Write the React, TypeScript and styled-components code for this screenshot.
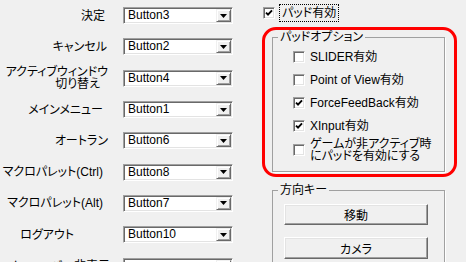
import React from "react";
import styled, { createGlobalStyle } from "styled-components";

const Global = createGlobalStyle`
  html, body { margin: 0; padding: 0; background: #f0f0f0; }
  body {
    font-family: "Liberation Sans", "Noto Sans CJK JP", sans-serif;
    font-size: 12px;
    color: #000;
  }
  #root { width: 466px; height: 262px; overflow: hidden; }
`;

const Page = styled.div`
  display: grid;
  grid-template-columns: 262px 1fr;
  width: 466px;
  height: 262px;
  overflow: hidden;
  background: #f0f0f0;
  font-feature-settings: "palt";
`;

const LeftCol = styled.div`
  display: flex;
  flex-direction: column;
`;

const Row = styled.div`
  display: grid;
  grid-template-columns: 123px 110px;
  height: 31.3px;
  flex-shrink: 0;
  align-items: center;
`;

const Label = styled.div<{ $pr: number }>`
  display: flex;
  flex-direction: column;
  align-items: flex-end;
  padding-right: ${(p) => p.$pr}px;
  line-height: 12px;
  white-space: nowrap;
`;

const LabelLine = styled.span<{ $shift?: number }>`
  padding-right: ${(p) => p.$shift ?? 0}px;
`;

const Combo = styled.div`
  height: 17px;
  box-sizing: border-box;
  border: 1px solid;
  border-color: #a0a0a0 #ffffff #ffffff #a0a0a0;
  box-shadow: inset 1px 1px 0 #696969, inset -1px -1px 0 #e3e3e3;
  background: #fff;
  display: flex;
  align-items: center;
`;

const ComboText = styled.span`
  flex: 1;
  padding-left: 4px;
  line-height: 13px;
`;

const DropButton = styled.span`
  width: 15px;
  height: 13px;
  margin-right: 1px;
  box-sizing: border-box;
  background: #f0f0f0;
  border: 1px solid;
  border-color: #f0f0f0 #696969 #696969 #f0f0f0;
  box-shadow: inset 1px 1px 0 #fff, inset -1px -1px 0 #a0a0a0;
  display: flex;
  align-items: center;
  justify-content: center;
`;

const RightCol = styled.div`
  display: flex;
  flex-direction: column;
  padding-top: 5px;
`;

const CheckRow = styled.div<{ $h: number; $ml?: number }>`
  display: flex;
  align-items: center;
  gap: 5px;
  height: ${(p) => p.$h}px;
  margin-left: ${(p) => p.$ml ?? 0}px;
  line-height: 12px;
  white-space: nowrap;
`;

const Box = styled.span`
  width: 12px;
  height: 12px;
  box-sizing: border-box;
  border: 1px solid;
  border-color: #a0a0a0 #ffffff #ffffff #a0a0a0;
  box-shadow: inset 1px 1px 0 #696969, inset -1px -1px 0 #e3e3e3;
  background: #fff;
  display: flex;
  align-items: center;
  justify-content: center;
  flex-shrink: 0;
`;

const Focused = styled.span`
  outline: 1px dotted #000;
  outline-offset: 0;
  padding: 2px 2px;
`;

const AnnotatedGroup = styled.div`
  position: relative;
  margin-top: 9px;
  margin-left: 10px;
  width: 173px;
`;

const GroupBox = styled.fieldset<{ $mt?: number; $ml?: number }>`
  margin: 0;
  margin-top: ${(p) => p.$mt ?? 0}px;
  margin-left: ${(p) => p.$ml ?? 0}px;
  width: 173px;
  box-sizing: border-box;
  min-width: 0;
  padding: 0;
  border: 1px solid #a0a0a0;
  box-shadow: 1px 1px 0 #fff;
`;

const Legend = styled.legend`
  margin-left: 5px;
  padding: 0 2px;
  line-height: 14px;
  font-size: 12px;
`;

const GroupBody = styled.div<{ $pad: string; $gap?: number }>`
  display: flex;
  flex-direction: column;
  padding: ${(p) => p.$pad};
  gap: ${(p) => p.$gap ?? 0}px;
`;

const Annotation = styled.div`
  position: absolute;
  left: -10px;
  top: -3px;
  right: -12px;
  bottom: -5px;
  border: 3px solid #ff0000;
  border-radius: 14px;
  pointer-events: none;
`;

const PushButton = styled.div<{ $h: number }>`
  width: 144px;
  height: ${(p) => p.$h}px;
  box-sizing: border-box;
  background: #f0f0f0;
  border: 1px solid;
  border-color: #ffffff #696969 #696969 #ffffff;
  box-shadow: inset -1px -1px 0 #a0a0a0, inset 1px 1px 0 #e3e3e3;
  display: flex;
  align-items: center;
  justify-content: center;
`;

const Arrow = () => (
  <svg width="7" height="4" viewBox="0 0 7 4">
    <path d="M0 0 H7 L3.5 4 Z" fill="#000" />
  </svg>
);

const Check = () => (
  <svg width="8" height="8" viewBox="0 0 8 8">
    <path d="M1 3.6 L3 5.6 L7 1.4" stroke="#000" strokeWidth="1.9" fill="none" />
  </svg>
);

type Mapping = { lines: { text: string; shift?: number }[]; pr: number; value: string };

const mappings: Mapping[] = [
  { lines: [{ text: "決定" }], pr: 18, value: "Button3" },
  { lines: [{ text: "キャンセル" }], pr: 16, value: "Button2" },
  {
    lines: [{ text: "アクティブウィンドウ" }, { text: "切り替え", shift: 8 }],
    pr: 15,
    value: "Button4",
  },
  { lines: [{ text: "メインメニュー" }], pr: 20, value: "Button1" },
  { lines: [{ text: "オートラン" }], pr: 15, value: "Button6" },
  { lines: [{ text: "マクロパレット(Ctrl)" }], pr: 20, value: "Button8" },
  { lines: [{ text: "マクロパレット(Alt)" }], pr: 20, value: "Button7" },
  { lines: [{ text: "ログアウト" }], pr: 49, value: "Button10" },
  { lines: [{ text: "メニューバー非表示" }], pr: 13, value: "" },
];

const options = [
  { lines: ["SLIDER有効"], checked: false, h: 23 },
  { lines: ["Point of View有効"], checked: false, h: 23 },
  { lines: ["ForceFeedBack有効"], checked: true, h: 23 },
  { lines: ["XInput有効"], checked: true, h: 23 },
  { lines: ["ゲームが非アクティブ時", "にパッドを有効にする"], checked: false, h: 24 },
];

export default function App() {
  return (
    <>
      <Global />
      <Page>
        <LeftCol>
          {mappings.map((m, i) => (
            <Row key={i}>
              <Label $pr={m.pr}>
                {m.lines.map((l, j) => (
                  <LabelLine key={j} $shift={l.shift}>
                    {l.text}
                  </LabelLine>
                ))}
              </Label>
              <Combo>
                <ComboText>{m.value}</ComboText>
                <DropButton>
                  <Arrow />
                </DropButton>
              </Combo>
            </Row>
          ))}
        </LeftCol>
        <RightCol>
          <CheckRow $h={16} $ml={1}>
            <Box>
              <Check />
            </Box>
            <Focused>パッド有効</Focused>
          </CheckRow>
          <AnnotatedGroup>
            <GroupBox>
              <Legend>パッドオプション</Legend>
              <GroupBody $pad="1.5px 0 9.5px 20px">
                {options.map((o, i) => (
                  <CheckRow key={i} $h={o.h}>
                    <Box>{o.checked && <Check />}</Box>
                    <span>
                      {o.lines.map((t, j) => (
                        <div key={j}>{t}</div>
                      ))}
                    </span>
                  </CheckRow>
                ))}
              </GroupBody>
            </GroupBox>
            <Annotation />
          </AnnotatedGroup>
          <GroupBox $mt={11} $ml={10}>
            <Legend>方向キー</Legend>
            <GroupBody $pad="7px 0 20px 11px" $gap={12}>
              <PushButton $h={21}>移動</PushButton>
              <PushButton $h={22}>カメラ</PushButton>
            </GroupBody>
          </GroupBox>
        </RightCol>
      </Page>
    </>
  );
}
